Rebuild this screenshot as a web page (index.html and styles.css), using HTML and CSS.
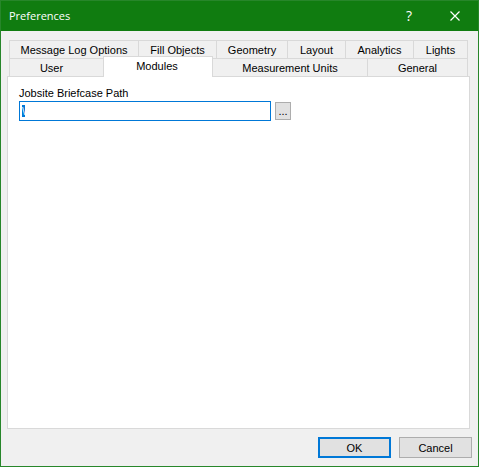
FILE: index.html
```html
<!DOCTYPE html>
<html lang="en">
<head>
<meta charset="utf-8">
<title>Preferences</title>
<link rel="stylesheet" href="styles.css">
</head>
<body>
<main class="window">
  <header class="titlebar">
    <h1 class="title">Preferences</h1>
    <button class="caption-button" type="button" aria-label="Help">?</button>
    <button class="caption-button" type="button" aria-label="Close">
      <svg class="close-icon" viewBox="0 0 10 10" aria-hidden="true"><path d="M0.5 0.5l9 9M9.5 0.5l-9 9"/></svg>
    </button>
  </header>
  <div class="content">
    <div class="tabs" role="tablist">
      <div class="tab-row tab-row-back">
        <button class="tab" type="button" role="tab">Message Log Options</button>
        <button class="tab" type="button" role="tab">Fill Objects</button>
        <button class="tab" type="button" role="tab">Geometry</button>
        <button class="tab" type="button" role="tab">Layout</button>
        <button class="tab" type="button" role="tab">Analytics</button>
        <button class="tab" type="button" role="tab">Lights</button>
      </div>
      <div class="tab-row tab-row-front">
        <button class="tab tab-first" type="button" role="tab">User</button>
        <button class="tab tab-active" type="button" role="tab" aria-selected="true">Modules</button>
        <button class="tab" type="button" role="tab">Measurement Units</button>
        <button class="tab" type="button" role="tab">General</button>
      </div>
    </div>
    <section class="panel" role="tabpanel">
      <label class="label" for="path">Jobsite Briefcase Path</label>
      <div class="field">
        <input class="path" id="path" type="text" value="\">
        <button class="browse" type="button" aria-label="Browse">...</button>
      </div>
    </section>
  </div>
  <footer class="actions">
    <button class="button button-default" type="button">OK</button>
    <button class="button" type="button">Cancel</button>
  </footer>
</main>
<script src="script.js"></script>
</body>
</html>
```
FILE: styles.css
```css
* {
  box-sizing: border-box;
}

body {
  margin: 0;
  font: 11px/16px "Liberation Sans", Arial, sans-serif;
  color: #000;
}

button,
input {
  font: inherit;
  color: inherit;
  margin: 0;
  padding: 0;
  border-radius: 0;
}

.window {
  display: flex;
  flex-direction: column;
  min-height: 100vh;
  border: 1px solid #27862a;
  background: #f0f0f0;
}

.titlebar {
  display: flex;
  align-items: center;
  height: 30px;
  padding-left: 8px;
  background: #107c10;
  color: #fff;
}

.title {
  flex: 1;
  margin: 0;
  font: 11px/16px "Open Sans", "Noto Sans", sans-serif;
}

.caption-button {
  display: flex;
  align-items: center;
  justify-content: center;
  width: 46px;
  height: 30px;
  border: 0;
  background: none;
  font: 14px/16px "Open Sans", "Noto Sans", sans-serif;
}

.close-icon {
  width: 10px;
  height: 10px;
  fill: none;
  stroke: #fff;
  stroke-width: 1.2;
}

.content {
  flex: 1;
  display: flex;
  flex-direction: column;
  padding: 9px 8px 0 6px;
}

.tabs {
  padding: 0 2px;
}

.tab-row {
  display: grid;
  height: 18px;
  border-right: 1px solid #d9d9d9;
}

.tab-row-back {
  grid-template-columns: 129fr 78fr 71fr 58fr 68fr 54fr;
}

.tab-row-front {
  grid-template-columns: 94fr 110fr 154fr 100fr;
}

.tab {
  padding-top: 1px;
  border: solid #d9d9d9;
  border-width: 1px 0 0 1px;
  background: #f0f0f0;
  white-space: nowrap;
}

.tab-first {
  padding-right: 10px;
}

.tab-active {
  z-index: 1;
  margin: -2px 0 -1px;
  padding: 0 2px 2px 0;
  border-right-width: 1px;
  background: #fff;
}

.tab-active + .tab {
  border-left-width: 0;
}

.panel {
  flex: 1;
  padding: 8px 11px;
  border: 1px solid #d9d9d9;
  background: #fff;
}

.label {
  display: block;
}

.field {
  display: flex;
  align-items: center;
  gap: 4px;
}

.path {
  flex: 0 1 252px;
  min-width: 0;
  height: 20px;
  padding: 0 2px;
  border: 1px solid #0078d7;
  outline: 0;
  background: #fff;
}

.path::selection {
  background: #0078d7;
  color: #fff;
}

.browse {
  width: 16px;
  height: 18px;
  border: 1px solid #adadad;
  background: #e1e1e1;
}

.actions {
  display: flex;
  justify-content: flex-end;
  gap: 8px;
  padding: 8px 6px;
}

.button {
  width: 73px;
  height: 21px;
  border: 1px solid #adadad;
  background: #e1e1e1;
}

.button-default {
  border: 2px solid #0078d7;
}
```
FILE: script.js
```js
const path = document.getElementById("path");
path.focus();
path.select();
```
